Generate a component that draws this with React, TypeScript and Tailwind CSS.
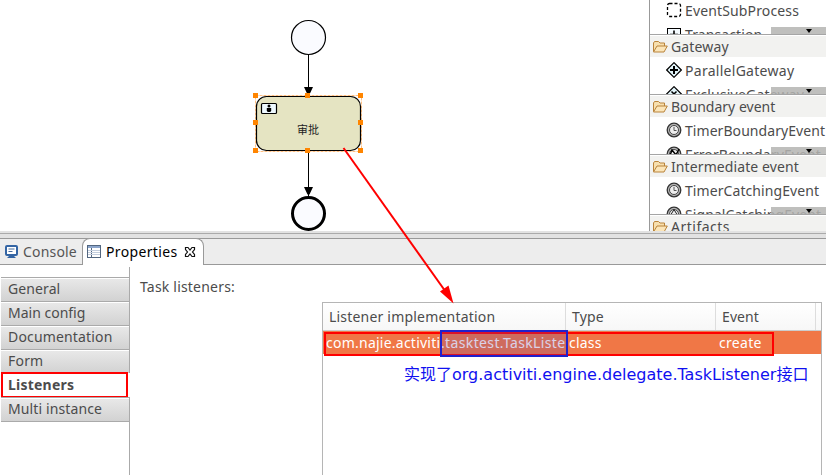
import React from "react";

function Folder() {
  return (
    <svg width="16" height="16" viewBox="0 0 16 16" className="shrink-0">
      <path d="M1.500 12.500V4l1-1.500h4L8 4h4.500v3" fill="#f7dfae" stroke="#b9833a" />
      <path d="M1.500 13 5 7h10.300L12 13z" fill="#fbe5b8" stroke="#b9833a" strokeLinejoin="round" />
    </svg>
  );
}

type Kind = "sub" | "plus" | "gateway" | "exclusive" | "timer" | "error" | "signal";

function ItemIcon({ kind }: { kind: Kind }) {
  return (
    <svg width="16" height="16" viewBox="0 0 16 16" fill="none" stroke="#000" className="-mt-[2px] shrink-0">
      {kind === "sub" && <rect x="1.500" y="1.500" width="13" height="13" rx="2" strokeWidth="1.300" strokeDasharray="3 2" />}
      {kind === "plus" && (
        <>
          <rect x="1.500" y="2.500" width="13" height="12" fill="#f5fbff" />
          <path d="M8 4.500v8M4 8.500h8" strokeWidth="1.600" />
        </>
      )}
      {(kind === "gateway" || kind === "exclusive") && <path d="M8 .7 15.300 8 8 15.300.7 8z" fill="#e4f6fb" strokeWidth="1.200" />}
      {kind === "gateway" && <path d="M8 4v8M4 8h8" strokeWidth="2" />}
      {kind === "exclusive" && <path d="m5.500 5.500 5 5m0-5-5 5" strokeWidth="1.500" />}
      {(kind === "timer" || kind === "error" || kind === "signal") && (
        <>
          <circle cx="8" cy="8" r="6.800" fill="#b5b5b5" stroke="#333" strokeWidth="1.300" />
          <circle cx="8" cy="8" r="4.500" fill="#eee" stroke="#444" />
        </>
      )}
      {kind === "timer" && <path d="M8 5v3.500h2.500" stroke="#555" />}
      {kind === "error" && <path d="m3 12 3-8 4 5 3-6" strokeWidth="1.500" />}
      {kind === "signal" && <path d="M8 3.500 12.500 11h-9z" stroke="#222" />}
    </svg>
  );
}

function Item({ kind, text, track }: { kind: Kind; text: string; track: string }) {
  return (
    <div className="flex h-6 items-center gap-[3px] pl-4">
      <ItemIcon kind={kind} />
      <span className={track}>{text}</span>
    </div>
  );
}

function ScrollStrip() {
  return (
    <div className="absolute bottom-0 right-0 h-[7px] w-[55px] bg-[#b4b4b2]/85">
      <svg width="6" height="4" viewBox="0 0 6 4" className="ml-[35px] mt-[2px]">
        <path d="M0 0h6L3 4z" fill="#000" />
      </svg>
    </div>
  );
}

function Drawer({ title, track, children }: { title: string; track: string; children?: React.ReactNode }) {
  return (
    <div className="relative h-[60px] shrink-0 overflow-hidden border-t border-[#a5a5a5]">
      <div className="mt-px flex h-[21px] items-center gap-[3px] bg-[#f2f2f0] pl-[2px]">
        <Folder />
        <span className={track}>{title}</span>
      </div>
      <div className="pt-[2px]">{children}</div>
      {children && <ScrollStrip />}
    </div>
  );
}

function Palette() {
  return (
    <div className="flex w-[177px] shrink-0 flex-col overflow-hidden border-l border-[#999] bg-white">
      <div className="relative h-[34px] shrink-0 overflow-hidden">
        <div className="-mt-px">
          <Item kind="sub" text="EventSubProcess" track="tracking-[0.14px]" />
          <Item kind="plus" text="Transaction" track="tracking-[0.1px]" />
        </div>
        <ScrollStrip />
      </div>
      <Drawer title="Gateway" track="tracking-[0.14px]">
        <Item kind="gateway" text="ParallelGateway" track="tracking-[0.28px]" />
        <Item kind="exclusive" text="ExclusiveGateway" track="tracking-[0.2px]" />
      </Drawer>
      <Drawer title="Boundary event" track="tracking-[0px]">
        <Item kind="timer" text="TimerBoundaryEvent" track="tracking-[0.06px]" />
        <Item kind="error" text="ErrorBoundaryEvent" track="tracking-[0.1px]" />
      </Drawer>
      <Drawer title="Intermediate event" track="tracking-[0.1px]">
        <Item kind="timer" text="TimerCatchingEvent" track="tracking-[0.08px]" />
        <Item kind="signal" text="SignalCatchingEvent" track="tracking-[0.08px]" />
      </Drawer>
      <Drawer title="Artifacts" track="tracking-[0.5px]" />
    </div>
  );
}

const handles = [[255, 95], [307, 95], [360, 95], [255, 122], [360, 122], [255, 150], [307, 150], [360, 150]];

function Diagram() {
  return (
    <div className="relative min-w-0 flex-1 overflow-hidden bg-white">
      <svg width="649" height="231" viewBox="0 0 649 231" className="block">
        <circle cx="308.500" cy="37.500" r="17" fill="#fafbff" stroke="#000" strokeWidth="1.200" />
        <path d="M308.500 54.500V96M308.500 151v45" stroke="#000" />
        <path d="M304 87h9l-3.500 7.500h-2zM304 187h9l-3.500 7.500h-2z" />
        <rect x="255.500" y="95.500" width="106" height="56" fill="none" stroke="#ffbf80" strokeDasharray="3 1" />
        <rect x="256.500" y="96.500" width="104" height="54" rx="10" fill="#e5e4c2" stroke="#000" strokeWidth="1.200" />
        <rect x="261.500" y="103.500" width="15" height="10" rx="1" fill="#eef9ff" stroke="#000" strokeWidth="1.200" />
        <circle cx="269" cy="106" r="1.500" />
        <path d="M266.800 108h4.400v2.500l-.8 1.500h-2.800l-.8-1.500z" />
        <circle cx="308.500" cy="213.500" r="16" fill="#fafbff" stroke="#000" strokeWidth="3" />
        {handles.map(([x, y]) => (
          <rect key={`${x}-${y}`} x={x - 2} y={y - 2} width="5" height="5" fill="#ff8500" />
        ))}
      </svg>
      <span className="absolute left-[297px] top-[122px] font-['Noto_Sans_CJK_SC',sans-serif] text-[11px] leading-[15px] text-[#222]">审批</span>
    </div>
  );
}

function Tabs() {
  return (
    <div className="flex h-[27px] shrink-0 border-t border-[#999] bg-[#ededed]">
      <div className="flex w-[82px] items-center gap-[2px] border-b border-[#999] pl-1 text-[#555]">
        <svg width="17" height="16" viewBox="0 0 17 16" className="shrink-0">
          <rect x="2" y="2" width="11" height="9" rx="1" fill="#fff" stroke="#3465a4" strokeWidth="2" />
          <path d="M4.500 5h6M4.500 7.500h4" stroke="#456a9b" />
          <path d="M5 12h5l2 2H3z" fill="#3465a4" />
        </svg>
        <span className="tracking-[0.18px]">Console</span>
      </div>
      <div className="-mt-px flex w-[122px] items-center rounded-t-[8px] border-x border-t border-[#999] bg-white pl-1 text-black">
        <svg width="15" height="14" viewBox="0 0 15 14" className="shrink-0">
          <rect x=".5" y=".5" width="13" height="12" fill="#fff" stroke="#52667f" />
          <path d="M1 2h12" stroke="#8ca5cb" strokeWidth="2" />
          <path d="M4.500 3v9" stroke="#52667f" />
          <path d="M1 5.500h12M1 7.500h12M1 9.500h12" stroke="#c3cede" />
        </svg>
        <span className="ml-1 w-[78px] tracking-[0.35px]">Properties</span>
        <svg width="12" height="12" viewBox="0 0 12 12" fill="#fff" stroke="#111" strokeWidth="1.200">
          <path d="M1.500 1.500h2.500l2 2.500 2-2.500h2.500v2L8.500 6l2 2.500v2H8L6 8l-2 2.500H1.500v-2l2-2.500-2-2.500z" />
        </svg>
      </div>
      <div className="flex-1 border-b border-[#999]" />
    </div>
  );
}

const sections = [
  ["General", "tracking-[0.1px]"],
  ["Main config", "tracking-[0px]"],
  ["Documentation", "tracking-[0.16px]"],
  ["Form", "tracking-[0.2px]"],
  ["Listeners", "tracking-[0.22px]"],
  ["Multi instance", "tracking-[0.12px]"],
];

function Sidebar() {
  return (
    <div className="flex w-[130px] shrink-0 flex-col pl-px pt-[2px]">
      <div className="h-[10px] shrink-0 border-r border-[#aaa]" />
      {sections.map(([name, track]) =>
        name === "Listeners" ? (
          <div key={name} className="-my-px flex h-[26px] w-[127px] shrink-0 items-center border-2 border-[#f00] bg-white pl-[5px] font-bold">
            <span className={track}>{name}</span>
          </div>
        ) : (
          <div key={name} className="h-6 shrink-0 border-r border-t border-[#aaa] pt-px">
            <div className="flex h-[22px] items-center bg-linear-to-b from-[#e8e8e8] to-[#d2d2d2] pb-[2px] pl-[7px]">
              <span className={track}>{name}</span>
            </div>
          </div>
        ),
      )}
      <div className="flex-1 border-r border-t border-[#aaa]" />
    </div>
  );
}

function ListenerTable() {
  return (
    <div className="ml-[192px] mt-[5px] w-[500px] flex-1 border-x border-t border-[#b5b5b5]">
      <div className="grid h-[28px] grid-cols-[243px_150px_100px_1fr] items-stretch border-b border-[#ccc] bg-linear-to-b from-white to-[#f7f7f7]">
        {[
          ["Listener implementation", "tracking-[0.2px]"],
          ["Type", "tracking-[0.2px]"],
          ["Event", "tracking-[0.1px]"],
        ].map(([title, track]) => (
          <div key={title} className="flex items-center border-r border-[#ddd] pl-[6px]">
            <span className={track}>{title}</span>
          </div>
        ))}
      </div>
      <div className="relative grid h-[23px] grid-cols-[118px_125px_150px_1fr] items-center bg-[#f07746] text-white">
        <span className="pl-[3px] tracking-[0.24px]">com.najie.activiti</span>
        <span className="tracking-[0.36px]">.tasktest.TaskListe</span>
        <span className="pl-[3px] tracking-[0.2px]">class</span>
        <span className="pl-[3px] tracking-[0.3px]">create</span>
        <div className="absolute left-px top-px h-[24px] w-[450px] border-2 border-[#f00]" />
        <div className="absolute -top-px left-[117px] h-[27px] w-[128px] border-2 border-[#2020cc] bg-[#6b49a3]/25" />
      </div>
      <div className="mt-[9px] whitespace-nowrap pl-[81px] font-['DejaVu_Sans','Noto_Sans_CJK_SC',sans-serif] text-[16px] leading-[24px] text-[#1010f0]">
        实现了org.activiti.engine.delegate.TaskListener接口
      </div>
    </div>
  );
}

export default function App() {
  return (
    <div className="relative flex h-[475px] w-[826px] flex-col overflow-hidden whitespace-nowrap bg-white font-['Noto_Sans','Noto_Sans_CJK_SC',sans-serif] text-[14px] leading-[20px] text-[#4c4c4c]">
      <div className="flex h-[231px] shrink-0">
        <Diagram />
        <Palette />
      </div>
      <div className="h-[7px] shrink-0 bg-[#e2e2e2] pt-[2px]">
        <div className="h-px bg-[#aaa]" />
      </div>
      <Tabs />
      <div className="flex min-h-0 flex-1">
        <Sidebar />
        <div className="flex flex-1 flex-col">
          <div className="pl-[10px] pt-[12px]">
            <span className="tracking-[0.2px]">Task listeners:</span>
          </div>
          <ListenerTable />
        </div>
      </div>
      <svg width="826" height="475" viewBox="0 0 826 475" className="pointer-events-none absolute left-0 top-0">
        <path d="M343.500 148 448 295" stroke="#f00" strokeWidth="2" />
        <path d="m453.500 303.500-13.500-12 8.500-6z" fill="#f00" />
      </svg>
    </div>
  );
}
